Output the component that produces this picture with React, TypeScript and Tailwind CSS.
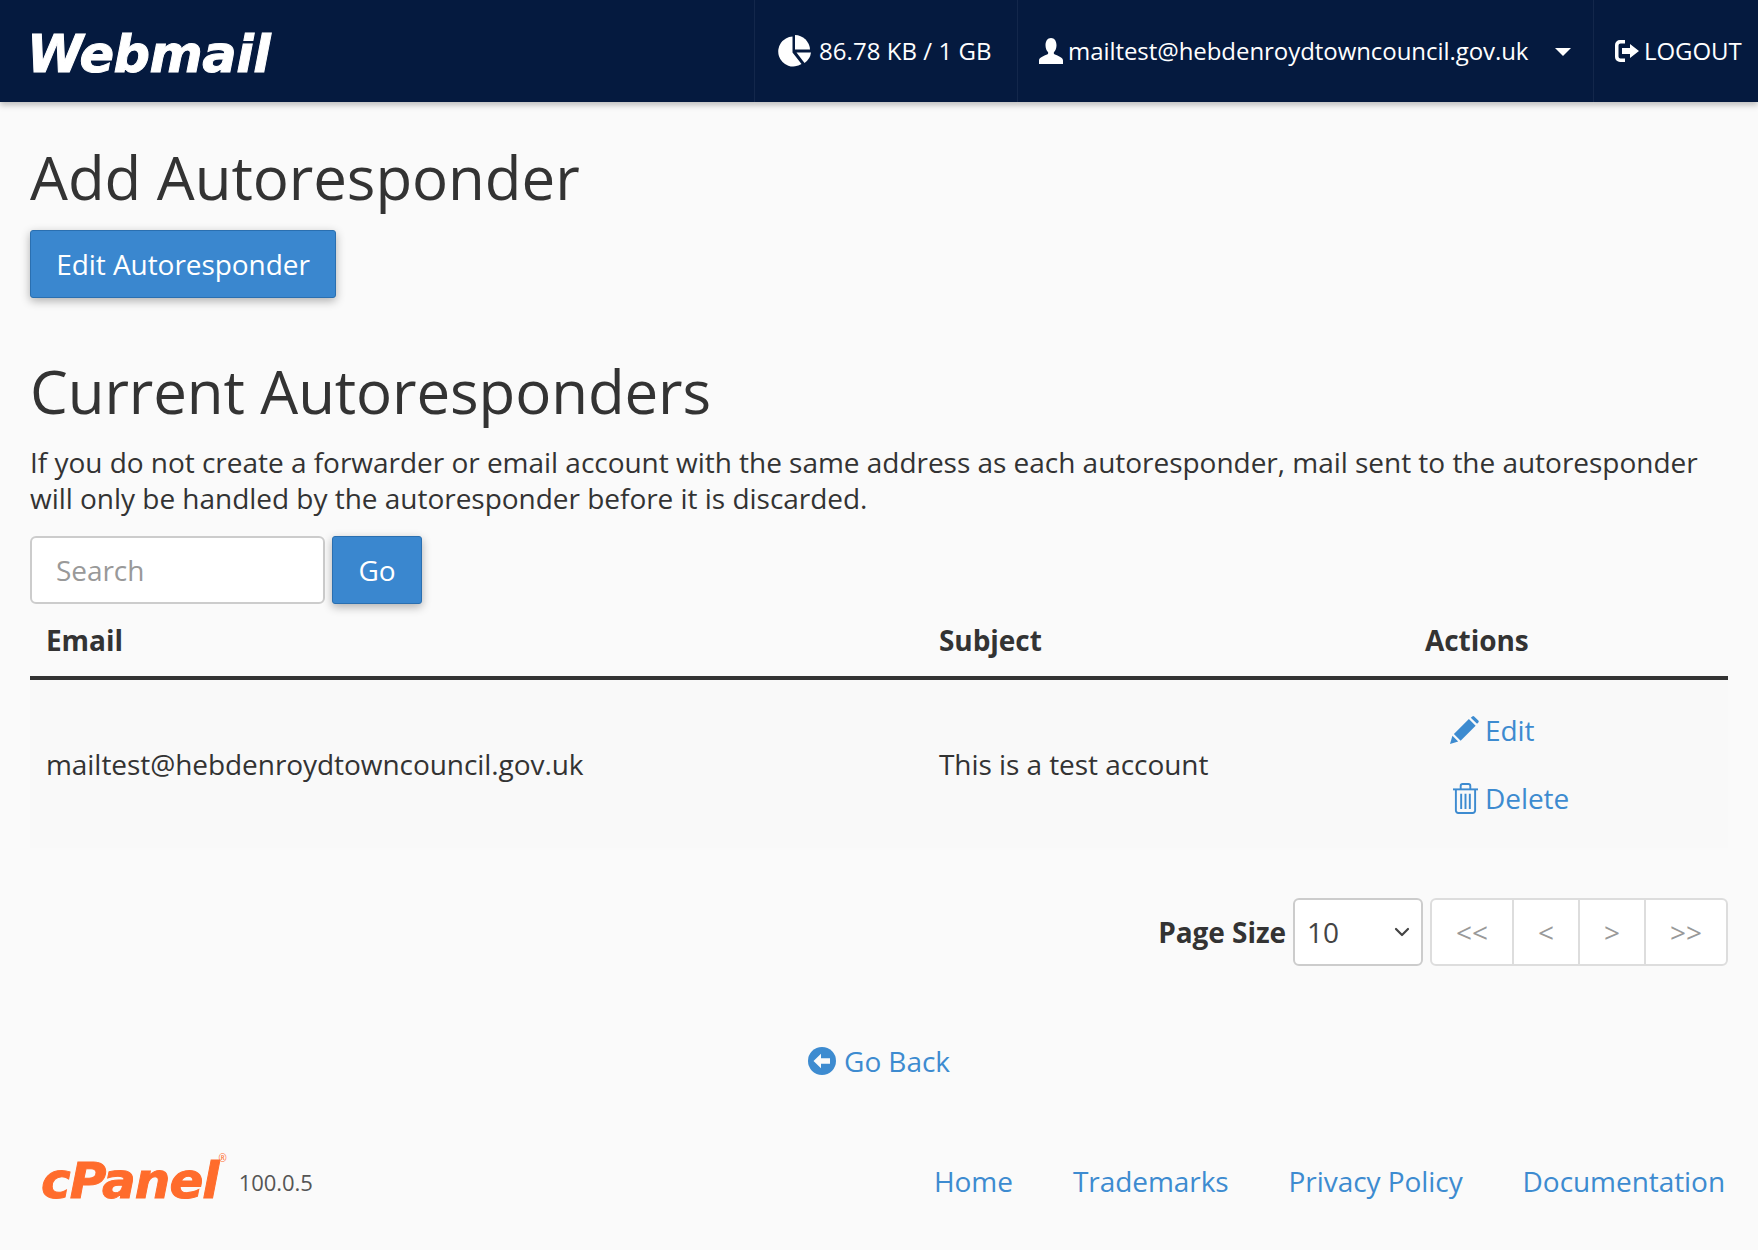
import { ChevronDown } from "lucide-react";

function PieIcon() {
  return (
    <svg viewBox="0 0 34 34" className="w-[34px] h-[34px] fill-white">
      <path d="M14.5 2.5A15 15 0 1 0 23.5 30L14.5 18.5Z" />
      <path d="M17 1a15.5 15.5 0 0 1 15 14.5H17Z" />
      <path d="M18.5 18.5H33a15 15 0 0 1-6.5 10.5Z" />
    </svg>
  );
}

function UserIcon() {
  return (
    <svg viewBox="0 0 26 28" className="w-[26px] h-[28px] fill-white">
      <path d="M13 1c3.600 0 5.500 3.200 5.500 7.300 0 2.900-1 5.300-2.400 6.800-.5.500-.4 1.800.3 2.200 2.900 1.500 8.600 2.800 8.600 6.200V27H1v-3.500c0-3.400 5.700-4.700 8.600-6.200.7-.4.800-1.700.3-2.200-1.400-1.500-2.400-3.900-2.400-6.800C7.500 4.200 9.400 1 13 1Z" />
    </svg>
  );
}

function LogoutIcon() {
  return (
    <svg viewBox="0 0 26 24" className="w-[26px] h-[24px] fill-white">
      <path d="M11 1H6a5 5 0 0 0-5 5v12a5 5 0 0 0 5 5h5v-3.500H6.500a2 2 0 0 1-2-2V6.500a2 2 0 0 1 2-2H11Z" />
      <path d="M16 5l9 7-9 7v-4H8V9h8Z" />
    </svg>
  );
}

function PencilIcon() {
  return (
    <svg viewBox="0 0 30 30" className="w-[29px] h-[29px] fill-[#3d8bd0]">
      <path d="M0 29l2.500-8.500 6 6Z" />
      <path d="M4 18.500 19.500 3l7 7L11 25.500Z" />
      <path d="M21.500 1.800 23 .5a1.500 1.500 0 0 1 2 0l4.300 4.200a1.500 1.500 0 0 1 0 2L28 8Z" />
    </svg>
  );
}

function TrashIcon() {
  return (
    <svg viewBox="0 0 26 32" className="w-[25px] h-[31px]" fill="none" stroke="#3d8bd0" strokeWidth="2">
      <path d="M0 6.500h26" />
      <path d="M8 6V3a2 2 0 0 1 2-2h6a2 2 0 0 1 2 2v3" />
      <path d="M3 7v21.500A2.500 2.500 0 0 0 5.500 31h15a2.500 2.500 0 0 0 2.500-2.500V7" />
      <path d="M8.500 11v16M13 11v16M17.500 11v16" />
    </svg>
  );
}

function BackIcon() {
  return (
    <svg viewBox="0 0 28 28" className="w-[28px] h-[28px]">
      <circle cx="14" cy="14" r="14" fill="#3d8bd0" />
      <path d="M5.500 14 13 6.800v4.400h9v5.600h-9v4.400Z" fill="#fafafa" />
    </svg>
  );
}

export default function App() {
  return (
    <div className="min-h-[1250px] bg-[#fafafa] font-['Open_Sans',sans-serif] text-[28px] leading-[36px] tracking-[-0.06px] text-[#333]">
      <header className="h-[102px] bg-[#051a3f] shadow-[0_3px_6px_rgba(0,0,0,0.25)] flex items-center text-white text-[24px]">
        <div className="pl-[27px] mr-auto font-['DejaVu_Sans',sans-serif] font-bold italic text-[51px] leading-none tracking-[-0.5px] [-webkit-text-stroke:1px_white] mt-[7px]">
          Webmail
        </div>
        <div className="h-full flex items-center gap-[7px] border-l border-[#13274b] w-[263px] pl-[23px] tracking-[0.05px]">
          <PieIcon />
          <span>86.78 KB / 1 GB</span>
        </div>
        <div className="h-full flex items-center border-l border-[#13274b] w-[576px] pl-[20px]">
          <UserIcon />
          <span className="ml-[4px]">mailtest@hebdenroydtowncouncil.gov.uk</span>
          <span className="ml-[27px] mt-[2px] w-0 h-0 border-x-[8px] border-x-transparent border-t-[8px] border-t-white" />
        </div>
        <div className="h-full flex items-center gap-[4px] border-l border-[#13274b] w-[165px] pl-[20px]">
          <LogoutIcon />
          <span>LOGOUT</span>
        </div>
      </header>

      <main className="px-[30px]">
        <h1 className="text-[60px] leading-[66px] pt-[42px] tracking-[-0.05px]">Add Autoresponder</h1>
        <button className="mt-[20px] block w-[306px] h-[68px] bg-[#3a87cf] border border-[#2a6fb0] rounded-[3px] text-white shadow-[0_3px_10px_rgba(0,0,0,0.3)]">
          Edit Autoresponder
        </button>

        <h2 className="text-[60px] leading-[66px] mt-[60px] tracking-[-0.1px]">Current Autoresponders</h2>
        <p className="mt-[20px] tracking-[-0.026px]">
          If you do not create a forwarder or email account with the same address as each autoresponder, mail sent to the autoresponder will only be handled by the autoresponder before it is discarded.
        </p>

        <div className="mt-[20px] flex gap-[7px]">
          <input
            placeholder="Search"
            className="w-[295px] h-[68px] px-[24px] bg-white border-2 border-[#ccc] rounded-[6px] placeholder:text-[#999]"
          />
          <button className="w-[90px] h-[68px] bg-[#3a87cf] border border-[#2a6fb0] rounded-[3px] text-white shadow-[0_3px_10px_rgba(0,0,0,0.3)]">
            Go
          </button>
        </div>

        <table className="w-full table-fixed border-collapse">
          <thead>
            <tr className="border-b-4 border-[#333] h-[74px]">
              <th className="w-[893px] px-[16px] text-left font-bold">Email</th>
              <th className="w-[486px] px-[16px] text-left font-bold">Subject</th>
              <th className="px-[16px] text-left font-bold">Actions</th>
            </tr>
          </thead>
          <tbody>
            <tr className="bg-[#f9f9f9] h-[170px]">
              <td className="px-[16px]">mailtest@hebdenroydtowncouncil.gov.uk</td>
              <td className="px-[16px]">This is a test account</td>
              <td className="px-[16px] text-[#3d8bd0]">
                <div className="flex flex-col gap-[32px] pl-[25px]">
                  <a className="flex items-center gap-[6px]"><PencilIcon />Edit</a>
                  <a className="flex items-center gap-[7px] pl-[3px]"><TrashIcon />Delete</a>
                </div>
              </td>
            </tr>
          </tbody>
        </table>

        <div className="mt-[50px] flex justify-end items-center">
          <span className="font-bold mr-[7px]">Page Size</span>
          <div className="w-[130px] h-[68px] bg-white border-2 border-[#ccc] rounded-[6px] flex items-center justify-between pl-[12px] pr-[7px] text-[#444]">
            10
            <ChevronDown className="w-[24px] h-[24px]" strokeWidth={2.2} />
          </div>
          <div className="ml-[7px] h-[68px] flex bg-white border-2 border-[#ddd] rounded-[6px] text-[#999] divide-x-2 divide-[#ddd]">
            <span className="w-[82px] flex items-center justify-center">&lt;&lt;</span>
            <span className="w-[66px] flex items-center justify-center">&lt;</span>
            <span className="w-[66px] flex items-center justify-center">&gt;</span>
            <span className="w-[80px] flex items-center justify-center">&gt;&gt;</span>
          </div>
        </div>

        <div className="mt-[77px] flex justify-center items-center gap-[8px] text-[#3d8bd0]">
          <BackIcon />
          Go Back
        </div>

        <footer className="mt-[77px] flex items-center text-[#3d8bd0]">
          <div className="pl-[11px] font-['DejaVu_Sans',sans-serif] font-bold italic text-[50px] leading-none tracking-[-1px] text-[#ff6c2c] [-webkit-text-stroke:1px_#ff6c2c]">
            cPanel
          </div>
          <span className="self-start mt-[-4px] text-[10px] leading-[12px] text-[#ff6c2c]">®</span>
          <span className="ml-[12px] mt-[2px] text-[22px] text-[#555]">100.0.5</span>
          <nav className="ml-auto flex gap-[60px] pr-[3px]">
            <a>Home</a>
            <a>Trademarks</a>
            <a>Privacy Policy</a>
            <a>Documentation</a>
          </nav>
        </footer>
      </main>
    </div>
  );
}
